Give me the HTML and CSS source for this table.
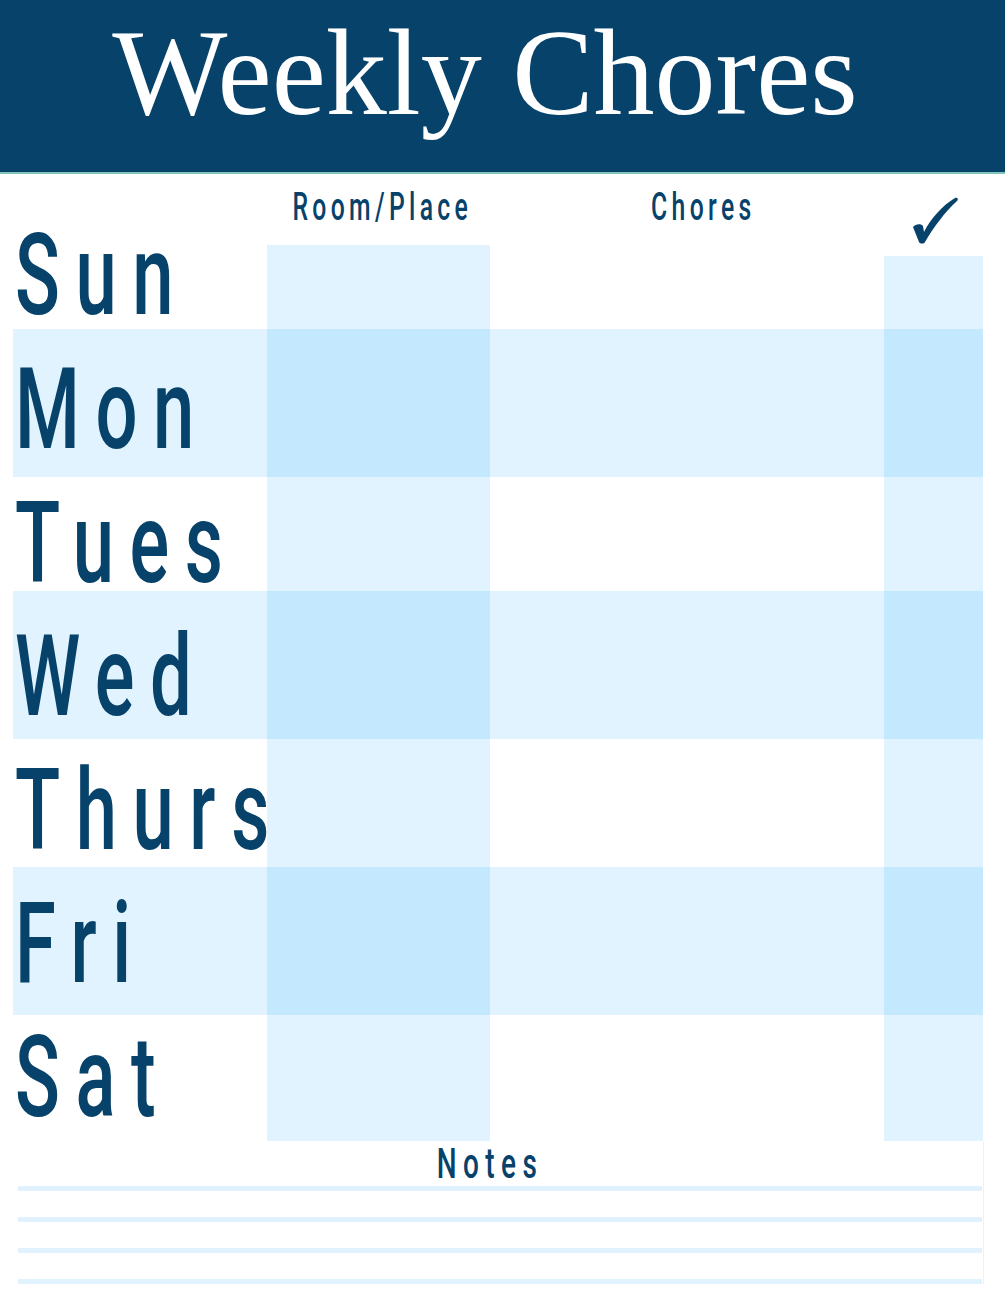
FILE: index.html
```html
<!DOCTYPE html>
<html lang="en">
<head>
<meta charset="utf-8">
<title>Weekly Chores</title>
<link rel="stylesheet" href="styles.css">
</head>
<body>
<header class="banner">
  <h1 class="title">Weekly Chores</h1>
</header>
<main class="board">
  <div class="band band-mon"></div>
  <div class="band band-wed"></div>
  <div class="band band-fri"></div>
  <div class="col col-room"></div>
  <div class="col col-check"></div>
  <div class="head head-room"><span class="narrow">Room/Place</span></div>
  <div class="head head-chores"><span class="narrow">Chores</span></div>
  <div class="head-check">
    <svg class="check" width="48" height="48" viewBox="0 0 48 48" aria-hidden="true">
      <path d="M2 31 C4 28 10 27 12 30 L13 36 C20 22 32 9 44 2 C46 1 48 3 46 5 C34 16 22 32 14 46 C13 48 9 48 8 46 Z" fill="#07426a"/>
    </svg>
  </div>
  <ul class="days">
    <li><span class="day">Sun</span></li>
    <li><span class="day">Mon</span></li>
    <li><span class="day">Tues</span></li>
    <li><span class="day">Wed</span></li>
    <li><span class="day">Thurs</span></li>
    <li><span class="day">Fri</span></li>
    <li><span class="day">Sat</span></li>
  </ul>
</main>
<section class="notes">
  <h2 class="notes-title"><span class="narrow">Notes</span></h2>
  <div class="lines">
    <div class="line"></div>
    <div class="line"></div>
    <div class="line"></div>
    <div class="line"></div>
  </div>
</section>
</body>
</html>
```

FILE: styles.css
```css
* { box-sizing: border-box; }

html, body {
  margin: 0;
  padding: 0;
  background: #ffffff;
}

body {
  width: 1005px;
  font-family: Roboto, "Open Sans", "Liberation Sans", sans-serif;
  color: #07426a;
}

.banner {
  height: 174px;
  background: #07426a;
  border-bottom: 2px solid #80c6b9;
  padding: 12px 35px 0 0;
}

.title {
  margin: 0;
  font-family: "Liberation Serif", "Times New Roman", serif;
  font-weight: 400;
  font-size: 122px;
  line-height: 122px;
  color: #ffffff;
  text-align: center;
}

.board {
  display: grid;
  grid-template-columns: 13px 254px 223px 394px 99px 22px;
  grid-template-rows: 71px 11px 73px 148px 114px 148px 128px 148px 126px;
}

.band {
  grid-column: 2 / 6;
  background: rgba(0, 155, 247, 0.12);
}
.band-mon { grid-row: 4 / 5; }
.band-wed { grid-row: 6 / 7; }
.band-fri { grid-row: 8 / 9; }

.col {
  background: rgba(0, 155, 247, 0.12);
}
.col-room {
  grid-column: 3 / 4;
  grid-row: 2 / 10;
}
.col-check {
  grid-column: 5 / 6;
  grid-row: 3 / 10;
}

.narrow {
  display: inline-block;
  flex: none;
  font-weight: 500;
  transform: scaleX(0.65);
  transform-origin: center;
  white-space: nowrap;
}

.head {
  grid-row: 1 / 2;
  align-self: start;
  display: flex;
  justify-content: center;
  padding-top: 14px;
  font-size: 38px;
  line-height: 38px;
  letter-spacing: 6.7px;
}
.head .narrow { margin-right: -6.7px; }
.head-room { grid-column: 3 / 4; }
.head-chores { grid-column: 4 / 5; padding-left: 26px; }

.head-check {
  grid-column: 5 / 6;
  grid-row: 1 / 2;
  display: flex;
  justify-content: center;
  padding-top: 22px;
  padding-left: 2px;
}
.check { display: block; }

.days {
  grid-column: 2 / 5;
  grid-row: 1 / 10;
  list-style: none;
  margin: 0;
  padding: 35.2px 0 0 2px;
  display: flex;
  flex-direction: column;
}

.days li {
  height: 133.67px;
  font-size: 114px;
  line-height: 133.67px;
  white-space: nowrap;
}

.day {
  display: inline-block;
  font-weight: 500;
  letter-spacing: 24px;
  transform: scaleX(0.65);
  transform-origin: left center;
}

.notes {
  margin-left: 18px;
  width: 966px;
  border-right: 1px solid #e4f3fd;
}

.notes-title {
  margin: 0;
  display: flex;
  justify-content: center;
  padding: 2px 32px 0 0;
  font-size: 43px;
  line-height: 41px;
  letter-spacing: 9.9px;
  font-weight: 500;
}
.notes-title .narrow { margin-right: -9.9px; }

.lines {
  display: flex;
  flex-direction: column;
  gap: 26px;
  padding-top: 2px;
  padding-right: 1px;
}

.line {
  height: 5px;
  background: #dff2fd;
}
```
